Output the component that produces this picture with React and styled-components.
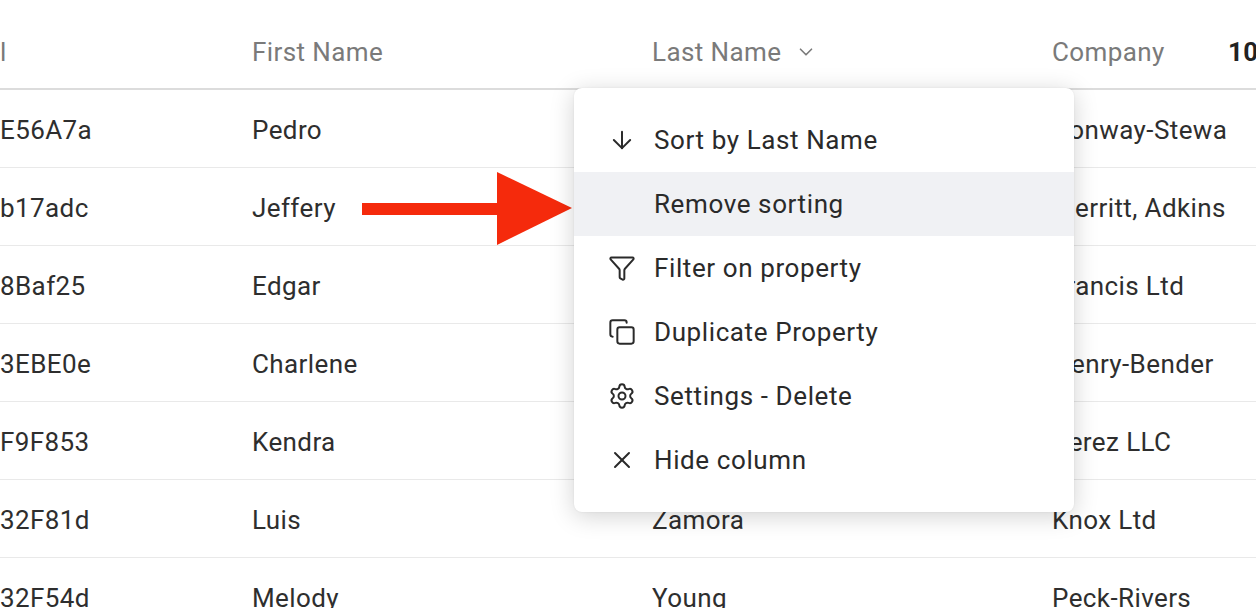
import React from 'react';
import styled, { createGlobalStyle } from 'styled-components';
import { ArrowDown, Filter, Copy, Settings, X, ChevronDown } from 'lucide-react';

const Global = createGlobalStyle`
  html, body { margin: 0; padding: 0; background: #fff; overflow: hidden; }
  body { font-family: Roboto, "Liberation Sans", sans-serif; }
`;

const Page = styled.div`
  position: relative;
  width: 1256px;
  height: 608px;
  overflow: hidden;
`;

const Row = styled.div`
  display: grid;
  grid-template-columns: 252px 400px 400px 176px 200px;
  align-items: center;
  box-sizing: border-box;
  height: ${p => (p.$head ? '90px' : '78px')};
  padding-top: ${p => (p.$head ? '16px' : '2px')};
  border-bottom: ${p => (p.$head ? '2px solid #dcdcdc' : '1px solid #e9e9e9')};
  font-size: 26px;
  letter-spacing: 0.4px;
  color: ${p => (p.$head ? '#7a7a7a' : '#2e2e2e')};
  white-space: nowrap;
`;

const Cell = styled.div`
  display: flex;
  align-items: center;
  gap: 14px;
  overflow: hidden;
  font-weight: ${p => (p.$bold ? 700 : 400)};
  color: ${p => (p.$bold ? '#222' : 'inherit')};
`;

const Menu = styled.div`
  position: absolute;
  left: 574px;
  top: 88px;
  width: 500px;
  padding: 20px 0;
  background: #fff;
  border-radius: 8px;
  box-shadow: 0 4px 24px rgba(0, 0, 0, 0.18), 0 0 2px rgba(0, 0, 0, 0.08);
`;

const Item = styled.div`
  display: flex;
  align-items: center;
  height: 64px;
  padding-left: 32px;
  gap: 16px;
  font-size: 26px;
  letter-spacing: 0.6px;
  color: #2a2a2a;
  background: ${p => (p.$active ? '#f0f1f4' : 'transparent')};
`;

const IconBox = styled.span`
  width: 32px;
  display: flex;
  justify-content: center;
  color: #2a2a2a;
`;

const Arrow = styled.svg`
  position: absolute;
  left: 362px;
  top: 170px;
`;

const rows = [
  ['E56A7a', 'Pedro', 'Cervantes', 'Conway-Stewart'],
  ['b17adc', 'Jeffery', 'Harmon', 'Merritt, Adkins and Sons'],
  ['8Baf25', 'Edgar', 'Rowe', 'Francis Ltd'],
  ['3EBE0e', 'Charlene', 'Holt', 'Henry-Bender'],
  ['F9F853', 'Kendra', 'Lara', 'Perez LLC'],
  ['32F81d', 'Luis', 'Zamora', 'Knox Ltd'],
  ['32F54d', 'Melody', 'Young', 'Peck-Rivers'],
];

const items = [
  [ArrowDown, 'Sort by Last Name'],
  [null, 'Remove sorting', true],
  [Filter, 'Filter on property'],
  [Copy, 'Duplicate Property'],
  [Settings, 'Settings - Delete'],
  [X, 'Hide column'],
];

export default function App() {
  return (
    <Page>
      <Global />
      <Row $head>
        <Cell>l</Cell>
        <Cell>First Name</Cell>
        <Cell>Last Name <ChevronDown size={22} strokeWidth={1.8} /></Cell>
        <Cell>Company</Cell>
        <Cell $bold>10</Cell>
      </Row>
      {rows.map(r => (
        <Row key={r[0]}>
          {r.map((c, i) => <Cell key={i}>{c}</Cell>)}
          <Cell />
        </Row>
      ))}
      <Arrow width="212" height="78" viewBox="0 0 212 78">
        <rect x="0" y="33" width="138" height="12" fill="#f52a0c" />
        <polygon points="135,2 210,38 135,75" fill="#f52a0c" />
      </Arrow>
      <Menu>
        {items.map(([Ic, label, active]) => (
          <Item key={label} $active={active}>
            <IconBox>{Ic && <Ic size={28} strokeWidth={1.7} />}</IconBox>
            {label}
          </Item>
        ))}
      </Menu>
    </Page>
  );
}
